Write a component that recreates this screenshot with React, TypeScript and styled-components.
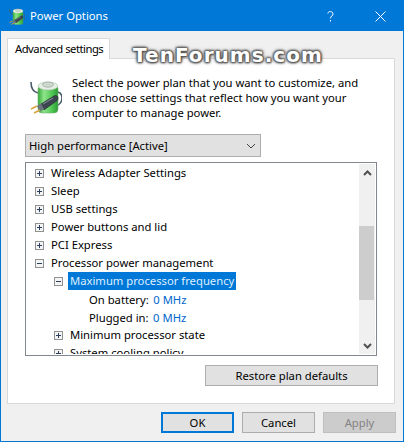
import React from "react";
import styled, { createGlobalStyle } from "styled-components";

const Global = createGlobalStyle`
  html, body { margin: 0; padding: 0; background: #fff; }
  * { box-sizing: border-box; }
`;

const Win = styled.div`
  position: relative;
  width: 404px;
  height: 442px;
  border: 1px solid #0078d7;
  background: #f0f0f0;
  font-family: "Noto Sans", "Open Sans", sans-serif;
  font-size: 11.25px;
  color: #000;
  display: flex;
  flex-direction: column;
  overflow: hidden;
`;
const TitleBar = styled.div`
  height: 30px;
  flex: none;
  background: #0078d7;
  color: #fff;
  display: flex;
  align-items: center;
  padding-left: 8px;
  gap: 5px;
`;
const TitleText = styled.div`
  flex: 1;
  line-height: 30px;
`;
const CaptionGlyph = styled.div`
  width: 45px;
  display: flex;
  justify-content: center;
  align-items: center;
`;
const Body = styled.div`
  flex: 1;
  display: flex;
  flex-direction: column;
  padding: 7px 7px 9px 6px;
`;
const TabStrip = styled.div`
  height: 21px;
  flex: none;
  display: flex;
`;
const Tab = styled.div`
  width: 103px;
  height: 21px;
  background: #fff;
  border: 1px solid #d9d9d9;
  border-bottom: 0;
  padding-left: 7px;
  line-height: 19px;
  letter-spacing: -0.5px;
  white-space: nowrap;
  position: relative;
  z-index: 1;
`;
const Panel = styled.div`
  width: 388px;
  height: 346px;
  margin-top: -1px;
  flex: none;
  background: #fff;
  border: 1px solid #d9d9d9;
  display: flex;
  flex-direction: column;
  padding: 16px 0 0 17px;
`;
const Intro = styled.div`
  display: flex;
  height: 59px;
  flex: none;
  padding: 0 0 0 5px;
  gap: 10px;
`;
const IntroIcon = styled.div`
  width: 32px;
  padding-top: 5px;
  flex: none;
`;
const IntroText = styled.div`
  line-height: 15px;
  width: 320px;
  white-space: pre-line;
`;
const Combo = styled.div`
  width: 236px;
  height: 23px;
  flex: none;
  background: #e1e1e1;
  border: 1px solid #adadad;
  display: flex;
  align-items: center;
  justify-content: space-between;
  padding: 0 4px 0 3px;
`;
const List = styled.div`
  margin-top: 5px;
  width: 352px;
  height: 194px;
  flex: none;
  border: 1px solid #828790;
  display: flex;
  background: #fff;
  padding: 1px;
  overflow: hidden;
`;
const Tree = styled.div`
  flex: 1;
  overflow: hidden;
`;
const Row = styled.div<{ $level: number }>`
  height: 18px;
  display: flex;
  align-items: center;
  padding-left: ${(p) => 8 + p.$level * 19}px;
  white-space: nowrap;
`;
const Toggle = styled.span`
  width: 9px;
  height: 9px;
  flex: none;
  margin-right: 7px;
  margin-top: 1px;
  display: block;
`;
const Label = styled.span<{ $selected?: boolean }>`
  padding: 0 2px;
  margin-left: -2px;
  height: 18px;
  line-height: 17px;
  background: ${(p) => (p.$selected ? "#0078d7" : "transparent")};
  color: ${(p) => (p.$selected ? "#dfefff" : "#000")};
`;
const SubLabel = styled.span`
  margin-left: 16px;
`;
const Value = styled.span`
  color: #0066cc;
  margin-left: 4.5px;
`;
const Scrollbar = styled.div`
  width: 16px;
  flex: none;
  background: #f0f0f0;
  display: flex;
  flex-direction: column;
  align-items: center;
`;
const ArrowCell = styled.div`
  height: 17px;
  width: 100%;
  flex: none;
  display: flex;
  align-items: center;
  justify-content: center;
`;
const Track = styled.div`
  flex: 1;
  width: 100%;
  padding-top: 45px;
  padding-bottom: 37px;
  display: flex;
`;
const Thumb = styled.div`
  flex: 1;
  background: #cdcdcd;
  margin-right: 1px;
`;
const RestoreRow = styled.div`
  width: 353px;
  display: flex;
  justify-content: flex-end;
  margin-top: 9px;
`;
const Button = styled.div<{ $w: number; $default?: boolean; $disabled?: boolean }>`
  width: ${(p) => p.$w}px;
  height: 21px;
  display: flex;
  align-items: center;
  justify-content: center;
  background: ${(p) => (p.$disabled ? "#cccccc" : "#e1e1e1")};
  color: ${(p) => (p.$disabled ? "#838383" : "#000")};
  border: ${(p) =>
    p.$default ? "2px solid #0078d7" : p.$disabled ? "1px solid #bfbfbf" : "1px solid #adadad"};
`;
const Footer = styled.div`
  flex: none;
  display: flex;
  justify-content: flex-end;
  gap: 8px;
  margin-top: 8px;
`;
const Watermark = styled.div`
  position: absolute;
  left: 132px;
  top: 42px;
  font-family: "DejaVu Sans", sans-serif;
  font-weight: 700;
  font-size: 20px;
  line-height: 24px;
  letter-spacing: 1.05px;
  color: #fff;
  text-shadow: 0 0 2px #444, 1px 1px 2px #555, -1px -1px 2px #777, 1px -1px 2px #777, -1px 1px 2px #777, 0 0 4px #777;
`;

const Expander = ({ open }: { open?: boolean }) => (
  <Toggle>
    <svg width="9" height="9" viewBox="0 0 9 9" shapeRendering="crispEdges" style={{ display: "block" }}>
      <rect x="0.5" y="0.5" width="8" height="8" fill="#f4f4f4" stroke="#919191" />
      <rect x="2" y="4" width="5" height="1" fill="#2d3f5f" />
      {!open && <rect x="4" y="2" width="1" height="5" fill="#2d3f5f" />}
    </svg>
  </Toggle>
);

const PowerIcon = ({ w, h }: { w: number; h: number }) => (
  <svg width={w} height={h} viewBox="0 0 32 34" style={{ display: "block" }}>
    <defs>
      <linearGradient id="cell" x1="0" x2="1" y1="0" y2="0">
        <stop offset="0" stopColor="#35a83a" />
        <stop offset="0.3" stopColor="#8fe58a" />
        <stop offset="0.7" stopColor="#4fc653" />
        <stop offset="1" stopColor="#2c9a35" />
      </linearGradient>
    </defs>
    <path d="M1 2C1 8 3 12 8 13M28 12c4 1 5 6 3 10-2 4-6 5-10 6" fill="none" stroke="#4a5a68" strokeWidth="1.6" />
    <rect x="8" y="5" width="20" height="28" rx="4" fill="url(#cell)" stroke="#6fb070" strokeWidth="0.6" />
    <ellipse cx="18" cy="6" rx="10" ry="4" fill="#e6efe6" stroke="#a8c4a8" strokeWidth="0.6" />
    <ellipse cx="18" cy="4.6" rx="5.5" ry="2.6" fill="#cfd8cf" stroke="#8f9a8f" strokeWidth="0.6" />
    <path d="M11 24l13-8c2-1 4 0 4 2s-1 3-3 4l-11 8z" fill="#3d4650" stroke="#22282e" strokeWidth="0.6" />
    <path d="M13 24l10-6" stroke="#87919b" strokeWidth="1" fill="none" />
    <path d="M7 26l4-2.5 3 5.5-4 2.5z" fill="#6a737d" />
    <path d="M1 29l6-3M4 33l6-3" stroke="#d9a441" strokeWidth="1.7" fill="none" />
  </svg>
);

const Chevron = () => (
  <svg width="10" height="6" viewBox="0 0 10 6">
    <path d="M1 1l4 4 4-4" fill="none" stroke="#444" strokeWidth="1" />
  </svg>
);
const ScrollArrow = ({ down }: { down?: boolean }) => (
  <svg width="9" height="6" viewBox="0 0 9 6">
    <path d={down ? "M1 1l3.5 3.5L8 1" : "M1 5l3.5-3.5L8 5"} fill="none" stroke="#505050" strokeWidth="2" />
  </svg>
);

const topRows = [
  "Wireless Adapter Settings",
  "Sleep",
  "USB settings",
  "Power buttons and lid",
  "PCI Express",
];

export default function App() {
  return (
    <Win>
      <Global />
      <TitleBar>
        <PowerIcon w={16} h={17} />
        <TitleText>Power Options</TitleText>
        <CaptionGlyph>
          <svg width="7" height="11" viewBox="0 0 7 11">
            <path d="M0.8 2.5C1 1 2.2 0.6 3.4 0.6c1.5 0 2.6 1 2.6 2.3 0 2-2.5 2.2-2.5 4.4M3.5 9v1.4" fill="none" stroke="#fff" strokeWidth="1" />
          </svg>
        </CaptionGlyph>
        <CaptionGlyph>
          <svg width="11" height="11" viewBox="0 0 11 11">
            <path d="M0.5 0.5l10 10M10.5 0.5l-10 10" stroke="#fff" strokeWidth="1" />
          </svg>
        </CaptionGlyph>
      </TitleBar>
      <Body>
        <TabStrip>
          <Tab>Advanced settings</Tab>
        </TabStrip>
        <Panel>
          <Intro>
            <IntroIcon>
              <PowerIcon w={32} h={34} />
            </IntroIcon>
            <IntroText>
              {"Select the power plan that you want to customize, and\nthen choose settings that reflect how you want your\ncomputer to manage power."}
            </IntroText>
          </Intro>
          <Combo>
            <span>High performance [Active]</span>
            <Chevron />
          </Combo>
          <List>
            <Tree>
              {topRows.map((t) => (
                <Row key={t} $level={0}>
                  <Expander />
                  <Label>{t}</Label>
                </Row>
              ))}
              <Row $level={0}>
                <Expander open />
                <Label>Processor power management</Label>
              </Row>
              <Row $level={1}>
                <Expander open />
                <Label $selected>Maximum processor frequency</Label>
              </Row>
              <Row $level={2}>
                <SubLabel>On battery:</SubLabel>
                <Value>0 MHz</Value>
              </Row>
              <Row $level={2}>
                <SubLabel>Plugged in:</SubLabel>
                <Value>0 MHz</Value>
              </Row>
              <Row $level={1}>
                <Expander />
                <Label>Minimum processor state</Label>
              </Row>
              <Row $level={1}>
                <Expander />
                <Label>System cooling policy</Label>
              </Row>
            </Tree>
            <Scrollbar>
              <ArrowCell>
                <ScrollArrow />
              </ArrowCell>
              <Track>
                <Thumb />
              </Track>
              <ArrowCell>
                <ScrollArrow down />
              </ArrowCell>
            </Scrollbar>
          </List>
          <RestoreRow>
            <Button $w={173}>Restore plan defaults</Button>
          </RestoreRow>
        </Panel>
        <Footer>
          <Button $w={73} $default>OK</Button>
          <Button $w={73}>Cancel</Button>
          <Button $w={73} $disabled>Apply</Button>
        </Footer>
      </Body>
      <Watermark>TenForums.com</Watermark>
    </Win>
  );
}
